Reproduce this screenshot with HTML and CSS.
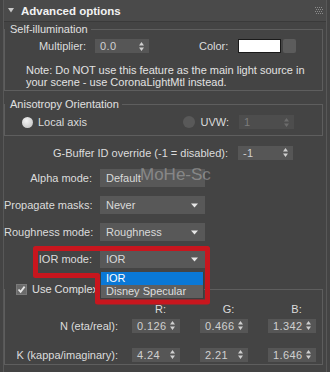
FILE: index.html
```html
<!DOCTYPE html>
<html lang="en">
<head>
    <meta charset="UTF-8">
    <meta name="viewport" content="width=device-width, initial-scale=1.0">
    <title>Advanced options</title>
    <link rel="stylesheet" href="styles.css">
</head>
<body>

<div class="panel">
    <div class="rollout-head">
        <svg class="caret" width="6" height="5" viewBox="0 0 6 5"><path d="M0 0H6L3 4.5Z" fill="#c8c8c8"/></svg>
        <span class="rollout-title">Advanced options</span>
        <svg class="grip" width="8" height="7" viewBox="0 0 8 7" fill="#8a8a8a">
            <rect x="0" y="0" width="1" height="1"/><rect x="2" y="0" width="1" height="1"/><rect x="4" y="0" width="1" height="1"/><rect x="6" y="0" width="1" height="1"/>
            <rect x="1" y="2" width="1" height="1"/><rect x="3" y="2" width="1" height="1"/><rect x="5" y="2" width="1" height="1"/><rect x="7" y="2" width="1" height="1"/>
            <rect x="0" y="4" width="1" height="1"/><rect x="2" y="4" width="1" height="1"/><rect x="4" y="4" width="1" height="1"/><rect x="6" y="4" width="1" height="1"/>
            <rect x="1" y="6" width="1" height="1"/><rect x="3" y="6" width="1" height="1"/><rect x="5" y="6" width="1" height="1"/><rect x="7" y="6" width="1" height="1"/>
        </svg>
    </div>

    <!-- Self-illumination -->
    <fieldset class="group self-illum">
        <legend>Self-illumination</legend>
        <div class="row si-row">
            <span class="label multiplier-label">Multiplier:</span>
            <div class="spinner multiplier">
                <span>0.0</span>
                <svg width="5" height="9" viewBox="0 0 5 9"><path d="M0 3.5L2.5 0L5 3.5ZM0 5.5H5L2.5 9Z"/></svg>
            </div>
            <span class="label color-label">Color:</span>
            <div class="swatch"></div>
            <div class="swatch-btn"></div>
        </div>
        <p class="note">Note: Do NOT use this feature as the main light source in<br>your scene - use CoronaLightMtl instead.</p>
    </fieldset>

    <!-- Anisotropy -->
    <fieldset class="group aniso">
        <legend>Anisotropy Orientation</legend>
        <div class="row aniso-row">
            <span class="radio on"></span>
            <span class="radio-text">Local axis</span>
            <div class="uvw">
                <span class="radio off"></span>
                <span class="radio-text">UVW:</span>
                <div class="spinner disabled uvw-spin">
                    <span>1</span>
                    <svg width="5" height="9" viewBox="0 0 5 9"><path d="M0 3.5L2.5 0L5 3.5ZM0 5.5H5L2.5 9Z"/></svg>
                </div>
            </div>
        </div>
    </fieldset>

    <div class="form">
        <div class="row gbuffer-row">
            <span class="label gbuffer-label">G-Buffer ID override (-1 = disabled):</span>
            <div class="spinner gbuffer">
                <span>-1</span>
                <svg width="5" height="9" viewBox="0 0 5 9"><path d="M0 3.5L2.5 0L5 3.5ZM0 5.5H5L2.5 9Z"/></svg>
            </div>
        </div>
        <div class="row select-row">
            <span class="label select-label">Alpha mode:</span>
            <div class="select"><span>Default</span></div>
        </div>
        <div class="row select-row">
            <span class="label select-label">Propagate masks:</span>
            <div class="select">
                <span>Never</span>
                <svg width="7" height="5" viewBox="0 0 7 5"><path d="M0 0.5H7L3.5 4.5Z"/></svg>
            </div>
        </div>
        <div class="row select-row">
            <span class="label select-label">Roughness mode:</span>
            <div class="select">
                <span>Roughness</span>
                <svg width="7" height="5" viewBox="0 0 7 5"><path d="M0 0.5H7L3.5 4.5Z"/></svg>
            </div>
        </div>
        <div class="row select-row">
            <span class="label select-label">IOR mode:</span>
            <div class="select">
                <span>IOR</span>
                <svg width="7" height="5" viewBox="0 0 7 5"><path d="M0 0.5H7L3.5 4.5Z"/></svg>
            </div>
        </div>
    </div>

    <!-- Complex IOR -->
    <fieldset class="group complex">
        <legend>
            <span class="legend-check">
                <span class="checkbox">
                    <svg width="9" height="9" viewBox="0 0 9 9"><path d="M1.5 4.5L3.6 6.8L7.6 1.6" fill="none" stroke="#e6e6e6" stroke-width="1.8"/></svg>
                </span>
                <span>Use Complex</span>
            </span>
        </legend>
        <div class="row rgb-head">
            <span class="label table-label"></span>
            <span class="channel first">R:</span>
            <span class="channel">G:</span>
            <span class="channel">B:</span>
        </div>
        <div class="row table-row n-row">
            <span class="label table-label">N (eta/real):</span>
            <div class="spinner cell first"><span>0.126</span><svg width="5" height="9" viewBox="0 0 5 9"><path d="M0 3.5L2.5 0L5 3.5ZM0 5.5H5L2.5 9Z"/></svg></div>
            <div class="spinner cell"><span>0.466</span><svg width="5" height="9" viewBox="0 0 5 9"><path d="M0 3.5L2.5 0L5 3.5ZM0 5.5H5L2.5 9Z"/></svg></div>
            <div class="spinner cell"><span>1.342</span><svg width="5" height="9" viewBox="0 0 5 9"><path d="M0 3.5L2.5 0L5 3.5ZM0 5.5H5L2.5 9Z"/></svg></div>
        </div>
        <div class="row table-row k-row">
            <span class="label table-label">K (kappa/imaginary):</span>
            <div class="spinner cell first"><span>4.24</span><svg width="5" height="9" viewBox="0 0 5 9"><path d="M0 3.5L2.5 0L5 3.5ZM0 5.5H5L2.5 9Z"/></svg></div>
            <div class="spinner cell"><span>2.21</span><svg width="5" height="9" viewBox="0 0 5 9"><path d="M0 3.5L2.5 0L5 3.5ZM0 5.5H5L2.5 9Z"/></svg></div>
            <div class="spinner cell"><span>1.646</span><svg width="5" height="9" viewBox="0 0 5 9"><path d="M0 3.5L2.5 0L5 3.5ZM0 5.5H5L2.5 9Z"/></svg></div>
        </div>
    </fieldset>
</div>

<!-- open dropdown of IOR mode -->
<div class="ior-list">
    <div class="item selected">IOR</div>
    <div class="item">Disney Specular</div>
</div>

<!-- red highlight drawn over the screenshot -->
<svg class="highlight" width="330" height="372" viewBox="0 0 330 372">
    <path d="M35.5 248.5H207.5V302H97.5V275.5H35.5Z" fill="none" stroke="#c8161e" stroke-width="5" stroke-linejoin="round"/>
</svg>

<div class="watermark">MoHe-Sc</div>

</body>
</html>
```

FILE: styles.css
```css
/* Base */
* {
    box-sizing: border-box;
}

body {
    margin: 0;
    position: relative;
    width: 330px;
    height: 372px;
    overflow: hidden;
    background: #444444;
    font-family: 'Liberation Sans', Arial, sans-serif;
    font-size: 11px;
    color: #dcdcdc;
}

.panel {
    margin-left: 3px;
    width: 324px;
    height: 372px;
    border-left: 1px solid #585858;
    border-right: 1px solid #585858;
}

/* Rollout header */
.rollout-head {
    display: flex;
    align-items: center;
    height: 22px;
    padding: 0 3px 0 4px;
    background: #4a4a4a;
    border-bottom: 1px solid #3a3a3a;
}

.rollout-title {
    margin-left: 7px;
    font-weight: bold;
    font-size: 11.5px;
    color: #f2f2f2;
}

.grip {
    margin-left: auto;
}

/* Group boxes */
.group {
    margin: 0;
    padding: 0;
    width: 319px;
    min-width: 0;
    border: 1px solid #5e5e5e;
}

.group legend {
    margin-left: 0;
    padding: 0 3px 0 5px;
    line-height: 14px;
    color: #e0e0e0;
}

.row {
    display: flex;
    align-items: center;
}

.label {
    flex: none;
    text-align: right;
    white-space: nowrap;
}

/* Spinners */
.spinner {
    display: flex;
    align-items: center;
    justify-content: space-between;
    flex: none;
    height: 14px;
    padding: 0 5px 0 5px;
    background: #565656;
    color: #d0d0d0;
    letter-spacing: 0.4px;
}

.spinner svg {
    fill: #cfcfcf;
}

.spinner.disabled {
    background: #4d4d4d;
    color: #7c7c7c;
}

.spinner.disabled svg {
    fill: #6c6c6c;
}

/* Self-illumination */
.self-illum {
    padding-bottom: 2px;
}

.si-row {
    height: 16px;
    margin-top: 2px;
}

.multiplier-label {
    width: 81px;
}

.multiplier {
    width: 54px;
    margin-left: 9px;
}

.color-label {
    width: 28px;
    margin-left: 50px;
}

.swatch {
    width: 43px;
    height: 14px;
    margin-left: 11px;
    background: #ffffff;
    border: 1px solid #1a1a1a;
}

.swatch-btn {
    width: 13px;
    height: 14px;
    margin-left: 2px;
    background: #5c5c5c;
    border-radius: 2px;
}

.note {
    margin: 10px 0 0 21px;
    line-height: 12px;
    color: #e2e2e2;
}

/* Anisotropy */
.aniso {
    margin-top: 6px;
    padding-bottom: 5px;
}

.aniso-row {
    height: 16px;
    margin-top: 3px;
}

.radio {
    flex: none;
    width: 11px;
    height: 11px;
    border-radius: 50%;
}

.radio.on {
    margin-left: 17px;
    background: radial-gradient(circle at 40% 35%, #f4f4f4, #bcbcbc);
}

.radio.off {
    width: 12px;
    height: 12px;
    background: #595959;
}

.radio-text {
    margin-left: 5px;
}

.uvw {
    display: flex;
    align-items: center;
    margin-left: auto;
    margin-right: 28px;
}

.uvw-spin {
    width: 55px;
    margin-left: 10px;
}

/* Plain form rows */
.gbuffer-row {
    height: 15px;
    margin-top: 9px;
}

.gbuffer-label {
    width: 224px;
}

.gbuffer {
    width: 55px;
    margin-left: 10px;
}

.select-row {
    height: 18px;
    margin-top: 9px;
}

.select-label {
    width: 88px;
}

.select {
    display: flex;
    align-items: center;
    justify-content: space-between;
    width: 105px;
    height: 18px;
    margin-left: 8px;
    padding: 0 7px 0 6px;
    background: #585858;
    color: #dadada;
}

.select svg {
    fill: #e6e6e6;
}

/* Complex IOR */
.complex {
    margin-top: 14px;
    padding-bottom: 2px;
}

.complex legend {
    padding-left: 11px;
}

.legend-check {
    display: inline-flex;
    align-items: center;
}

.checkbox {
    display: inline-flex;
    align-items: center;
    justify-content: center;
    width: 11px;
    height: 11px;
    margin-right: 5px;
    background: #6a6a6a;
    border: 1px solid #7a7a7a;
}

.rgb-head {
    height: 14px;
    margin-top: 5px;
}

.table-label {
    width: 113px;
}

.channel {
    width: 48px;
    margin-left: 20px;
    padding-left: 9px;
    text-align: center;
}

.channel.first,
.cell.first {
    margin-left: 14px;
}

.table-row {
    height: 14px;
}

.n-row {
    margin-top: 3px;
}

.k-row {
    margin-top: 15px;
}

.cell {
    width: 48px;
    margin-left: 20px;
}

/* Overlays */
.ior-list {
    position: absolute;
    left: 100px;
    top: 272px;
    width: 104px;
    background: #5f5f5f;
    border: 1px solid #3e3e3e;
    border-top: none;
}

.ior-list .item {
    height: 13px;
    line-height: 13px;
    padding-left: 5px;
    color: #dedede;
}

.ior-list .item.selected {
    background: #0a78d6;
    color: #ffffff;
}

.highlight {
    position: absolute;
    left: 0;
    top: 0;
    filter: blur(0.5px);
}

.watermark {
    position: absolute;
    left: 140px;
    top: 165px;
    font-size: 17px;
    line-height: 20px;
    color: rgba(255, 255, 255, 0.3);
}
```
